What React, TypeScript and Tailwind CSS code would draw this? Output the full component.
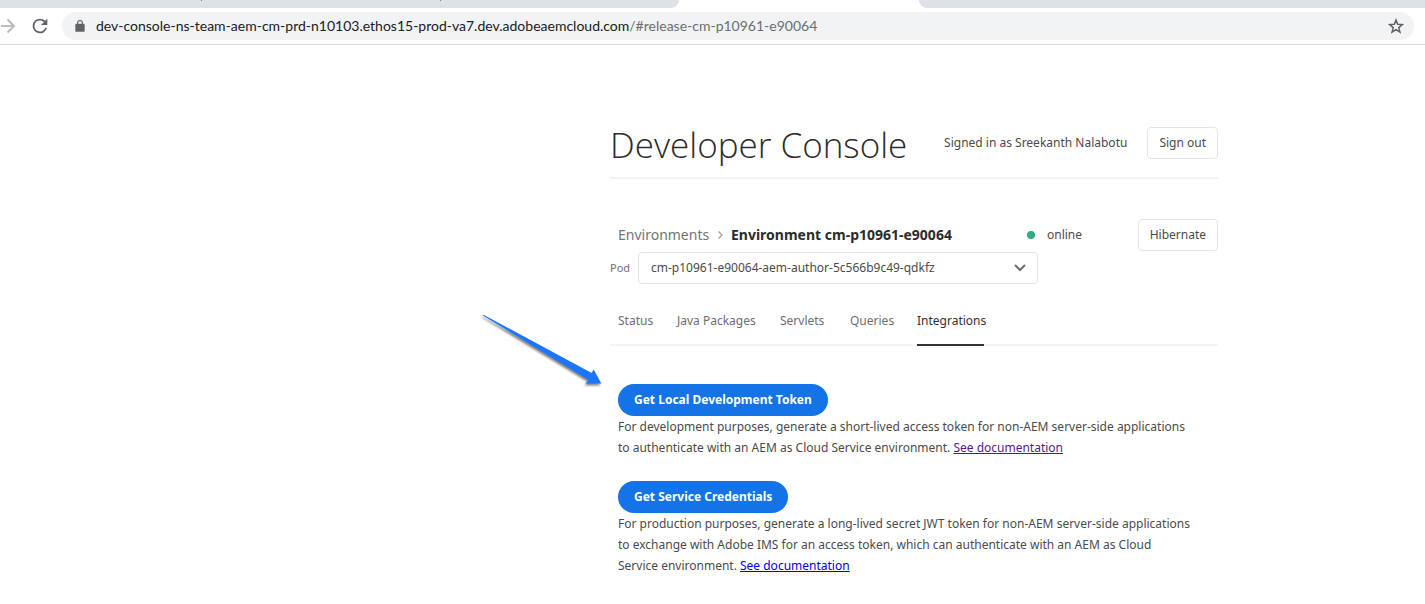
import type { ReactNode } from 'react';

const tabs = [
  { label: 'Status', width: 'w-9' },
  { label: 'Java Packages', width: 'w-20' },
  { label: 'Servlets', width: 'w-[47px]' },
  { label: 'Queries', width: 'w-[44px]' },
  { label: 'Integrations', width: 'w-[67px]', active: true },
];

function BrowserBar() {
  return (
    <header className="border-b border-[#dadce0]">
      <div className="flex h-2 bg-white">
        <div className="flex w-[679px] rounded-br-lg bg-[#dee1e6]">
          <span className="ml-[201px] h-px w-px bg-[#80868b]" />
          <span className="ml-[238px] h-px w-px bg-[#80868b]" />
        </div>
        <div className="w-60" />
        <div className="grow rounded-bl-lg bg-[#dee1e6]" />
      </div>
      <div className="flex h-9 items-center pr-[11px]">
        <button type="button" aria-label="Forward" className="w-4 shrink-0">
          <svg viewBox="0 0 16 16" className="size-4" fill="none" stroke="#babcbe" strokeWidth="2">
            <path d="M1 8h13M7.500 1.500 14 8l-6.500 6.500" />
          </svg>
        </button>
        <button type="button" aria-label="Reload" className="ml-[13px] w-[22px] shrink-0">
          <svg viewBox="0 0 24 24" className="size-[22px]" fill="#5f6368">
            <path d="M17.650 6.350A7.950 7.950 0 0 0 12 4a8 8 0 1 0 7.730 10h-2.080A6 6 0 1 1 12 6c1.660 0 3.140.69 4.220 1.780L13 11h7V4l-2.350 2.350z" />
          </svg>
        </button>
        <div className="ml-[11px] flex h-7 grow items-center rounded-full bg-[#f1f3f4] pr-[10px] pl-[11px]">
          <svg viewBox="0 0 24 24" className="size-[14px] shrink-0" fill="#5f6368">
            <path d="M18 8h-1V6.500a5 5 0 0 0-10 0V8H6a2 2 0 0 0-2 2v10a2 2 0 0 0 2 2h12a2 2 0 0 0 2-2V10a2 2 0 0 0-2-2zM9 8V6.500a3 3 0 0 1 6 0V8z" />
          </svg>
          <p className="ml-[9px] grow font-['Lato',sans-serif] text-sm whitespace-nowrap text-[#202124]">
            dev-console-ns-team-aem-cm-prd-n10103.ethos15-prod-va7.dev.adobeaemcloud.com
            <span className="text-[#6b6f74]">/#release-cm-p10961-e90064</span>
          </p>
          <button type="button" aria-label="Bookmark this page" className="shrink-0">
            <svg viewBox="0 0 24 24" className="size-4" fill="none" stroke="#5f6368" strokeWidth="2.200">
              <path d="m12 3 2.500 6.500 7 .4-5.400 4.500 1.800 6.800L12 17.300l-5.900 3.900 1.800-6.800L2.500 9.900l7-.4z" />
            </svg>
          </button>
        </div>
      </div>
    </header>
  );
}

function OutlineButton({ children }: { children: ReactNode }) {
  return (
    <button type="button" className="h-8 rounded border border-[#e4e4e4] px-[11px] text-[#4b4b4b]">
      {children}
    </button>
  );
}

function PrimaryButton({ children }: { children: ReactNode }) {
  return (
    <button type="button" className="block h-8 rounded-full bg-[#1473e6] px-4 font-bold whitespace-nowrap text-white">
      {children}
    </button>
  );
}

function Arrow() {
  return (
    <svg
      aria-hidden="true"
      viewBox="0 0 130 80"
      className="absolute -top-[70px] -left-[132px] h-20 w-[130px] drop-shadow-[-1px_2px_1px_rgba(0,0,0,0.5)]"
      fill="#1a75ff"
    >
      <path d="M4.500 1.200 5.500.8 113.700 59 115.700 55.500 123.300 69.500 107.300 69.500 110.800 66z" />
    </svg>
  );
}

export default function App() {
  return (
    <div className="bg-white font-['Noto_Sans',sans-serif] text-xs text-[#4b4b4b]">
      <BrowserBar />
      <main className="mr-[207px] ml-auto max-w-[608px] pt-[82px] pb-7">
        <div className="flex h-[52px] items-start justify-between border-b-2 border-[#f3f3f3]">
          <h1 className="font-['Open_Sans',sans-serif] text-[35px] leading-9 font-light text-[#2c2c2c]">Developer Console</h1>
          <div className="flex items-center gap-5">
            <span>Signed in as Sreekanth Nalabotu</span>
            <OutlineButton>Sign out</OutlineButton>
          </div>
        </div>

        <div className="mt-10 flex h-8 items-center pl-2">
          <nav aria-label="Breadcrumb" className="flex w-[409px] items-center text-sm">
            <a href="#environments" className="w-[91px] whitespace-nowrap text-[#747474]">Environments</a>
            <svg viewBox="0 0 8 10" className="mx-[7px] h-[10px] w-2" fill="none" stroke="#aaa" strokeWidth="1.500">
              <path d="m2.500 1.500 3.500 3.500-3.500 3.500" />
            </svg>
            <span className="font-bold whitespace-nowrap text-[#2c2c2c]">Environment cm-p10961-e90064</span>
          </nav>
          <span className="size-2 rounded-full bg-[#33ab84]" />
          <span className="ml-3 grow">online</span>
          <OutlineButton>Hibernate</OutlineButton>
        </div>

        <div className="mt-px flex items-center">
          <label htmlFor="pod" className="w-7 text-[11px] text-[#6e6e6e]">Pod</label>
          <select id="pod" className="h-8 w-[400px] appearance-none rounded border border-[#e4e4e4] bg-white px-3">
            <option>cm-p10961-e90064-aem-author-5c566b9c49-qdkfz</option>
          </select>
          <svg viewBox="0 0 12 8" className="pointer-events-none -ml-6 h-2 w-3" fill="none" stroke="#6e6e6e" strokeWidth="2">
            <path d="m1.500 1.500 4.500 4.500 4.500-4.500" strokeLinecap="round" />
          </svg>
        </div>

        <div role="tablist" className="mt-[14px] flex h-12 gap-[23px] border-b-2 border-[#f3f3f3] pl-2">
          {tabs.map((tab) => (
            <button
              key={tab.label}
              type="button"
              role="tab"
              aria-selected={!!tab.active}
              className={`${tab.width} -mb-0.5 flex h-12 border-b-2 pt-[15px] whitespace-nowrap ${
                tab.active ? 'border-[#323232] text-[#323232]' : 'border-transparent text-[#6e6e6e]'
              }`}
            >
              {tab.label}
            </button>
          ))}
        </div>

        <section className="relative mt-[38px] pl-2">
          <Arrow />
          <PrimaryButton>Get Local Development Token</PrimaryButton>
          <p className="leading-[21px]">
            For development purposes, generate a short-lived access token for non-AEM server-side applications
            <br />
            to authenticate with an AEM as Cloud Service environment.{' '}
            <a href="#token-docs" className="text-[#551a8b] underline">See documentation</a>
          </p>
        </section>
        <section className="mt-[23px] pl-2">
          <PrimaryButton>Get Service Credentials</PrimaryButton>
          <p className="leading-[21px]">
            For production purposes, generate a long-lived secret JWT token for non-AEM server-side applications
            <br />
            to exchange with Adobe IMS for an access token, which can authenticate with an AEM as Cloud
            <br />
            Service environment.{' '}
            <a href="#credential-docs" className="text-[#0000ee] underline">See documentation</a>
          </p>
        </section>
      </main>
    </div>
  );
}
